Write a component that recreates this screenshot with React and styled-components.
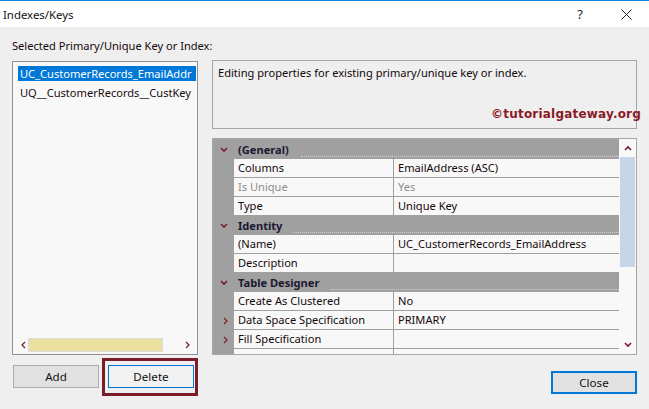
import React from 'react';
import styled, { createGlobalStyle } from 'styled-components';

const GlobalStyle = createGlobalStyle`
    body {
        margin: 0;
        background: #efefef;
        font-family: "Noto Sans", "Liberation Sans", sans-serif;
        font-size: 11.1px;
        color: #14080a;
    }
`;

const Window = styled.div`
    width: 649px;
    height: 409px;
    box-sizing: border-box;
    border-top: 1px solid #1883d7;
    background: #efefef;
    overflow: hidden;
`;

const TitleBar = styled.div`
    height: 26px;
    background: #ffffff;
    display: flex;
    align-items: center;
    padding: 0 0 0 3px;
`;

const Title = styled.div`
    flex: 1;
    color: #111;
    font-size: 11.4px;
`;

const TitleButton = styled.div`
    width: ${p => p.$w}px;
    display: flex;
    justify-content: center;
    align-items: center;
    color: #222;
    font-size: 13px;
`;

const Content = styled.div`
    padding: 0 12px;
`;

const Label = styled.div`
    height: 16px;
    line-height: 16px;
    margin: 11px 0 6px;
`;

const Main = styled.div`
    display: grid;
    grid-template-columns: 186px 425px;
    column-gap: 14px;
    height: 295px;
`;

const ListBox = styled.div`
    margin-top: 1px;
    border: 1px solid #8f9196;
    background: #f8f8f8;
    display: flex;
    flex-direction: column;
    padding: 4px 0 0 5px;
    box-sizing: border-box;
    height: 294px;
`;

const ListItem = styled.div`
    width: 178px;
    height: 15px;
    line-height: 15px;
    margin-bottom: 4px;
    padding-left: 2px;
    box-sizing: border-box;
    white-space: nowrap;
    overflow: hidden;
    background: ${p => (p.$selected ? '#0078d7' : 'transparent')};
    color: ${p => (p.$selected ? '#ffffff' : '#1a0a10')};
`;

const HScroll = styled.div`
    margin: auto 0 1px -5px;
    height: 17px;
    display: flex;
    align-items: center;
    padding: 0 6px 0 8px;
`;

const HThumb = styled.div`
    width: 135px;
    height: 14px;
    margin: 0 auto 0 1px;
    background-color: #e7e0b6;
    background-image: radial-gradient(#f2df82 0.65px, transparent 0.75px);
    background-size: 2px 2px;
    border: 1px solid #d8dde0;
    box-sizing: border-box;
`;

const RightColumn = styled.div`
    display: flex;
    flex-direction: column;
    gap: 9px;
`;

const DescBox = styled.div`
    height: 69px;
    box-sizing: border-box;
    border: 1px solid #a6a6a6;
    display: flex;
    flex-direction: column;
    justify-content: space-between;
    padding: 4px 0 7px 5px;
`;

const Watermark = styled.div`
    align-self: flex-end;
    margin-right: -5px;
    font-family: "DejaVu Sans", Verdana, sans-serif;
    font-weight: bold;
    font-size: 12px;
    color: #8b1a28;
    letter-spacing: 0.2px;
`;

const Grid = styled.div`
    height: 217px;
    box-sizing: border-box;
    border: 1px solid #a6a6a6;
    display: flex;
    background: #f8f8f8;
`;

const Rows = styled.div`
    flex: 1;
    background: #a0a0a0;
    overflow: hidden;
    padding-top: 1px;
`;

const Row = styled.div`
    display: grid;
    grid-template-columns: 21px 160px 1fr;
    height: 19px;
`;

const Gutter = styled.div`
    display: flex;
    align-items: center;
    justify-content: center;
    padding-left: ${p => (p.$shift ? 4 : 0)}px;
`;

const Cell = styled.div`
    background: #f8f8f8;
    border-bottom: 1px solid #a0a0a0;
    border-right: ${p => (p.$name ? '1px solid #a0a0a0' : 'none')};
    line-height: 18px;
    padding-left: 4px;
    color: ${p => (p.$muted ? '#8d8d8d' : '#14080a')};
    white-space: nowrap;
    overflow: hidden;
`;

const HeaderCell = styled.div`
    grid-column: 2 / 4;
    display: flex;
    align-items: center;
    padding-left: 4px;
    font-weight: bold;
    color: #1b1830;
`;

const Dots = styled.div`
    flex: 1;
    align-self: flex-end;
    margin: 0 0 2px 12px;
    border-bottom: 1px dotted #cfcfcf;
`;

const VScroll = styled.div`
    width: 17px;
    background: #f8f8f8;
    display: flex;
    flex-direction: column;
    align-items: center;
`;

const ArrowBox = styled.div`
    height: 18px;
    display: flex;
    align-items: center;
    justify-content: center;
`;

const VThumb = styled.div`
    width: 15px;
    height: 110px;
    background-color: #c6d6e6;
    background-image: radial-gradient(#efe08c 0.55px, transparent 0.65px);
    background-size: 2px 2px;
    margin-bottom: auto;
`;

const Footer = styled.div`
    display: flex;
    align-items: flex-start;
    margin-top: 10px;
    padding-left: 1px;
`;

const Button = styled.button`
    width: 86px;
    height: 23px;
    box-sizing: border-box;
    font: inherit;
    font-size: 11.6px;
    color: #111;
    background: ${p => (p.$plain ? '#f2f2f2' : '#e1e1e1')};
    border: ${p => (p.$focus ? '1px solid #0078d7' : '1px solid #adadad')};
    padding: 0;
`;

const DeleteButton = styled(Button)`
    position: relative;
    margin-left: 9px;
    &::after {
        content: '';
        position: absolute;
        top: -8px;
        left: -7px;
        right: -5px;
        bottom: -9px;
        border: 3px solid #7a1c2a;
    }
`;

const CloseButton = styled(Button)`
    margin: 6px 0 0 auto;
    border: 2px solid #0078d7;
`;

const Chevron = ({ dir }) => {
    const pts = {
        down: '1,1 4,4 7,1',
        right: '1,1 4,4 1,7',
        up: '1,5 4,2 7,5',
        left: '4,1 1,4 4,7',
    }[dir];
    const size = dir === 'right' || dir === 'left' ? [6, 8] : [8, 6];
    return (
        <svg width={size[0]} height={size[1]} viewBox={`0 0 ${size[0]} ${size[1]}`}>
            <polyline points={pts} fill="none" stroke="#7a1c2a" strokeWidth={dir === 'down' || dir === 'up' ? 1.6 : 1.2} />
        </svg>
    );
};

const sections = [
    {
        title: '(General)',
        rows: [
            { name: 'Columns', value: 'EmailAddress (ASC)' },
            { name: 'Is Unique', value: 'Yes', muted: true },
            { name: 'Type', value: 'Unique Key' },
        ],
    },
    {
        title: 'Identity',
        rows: [
            { name: '(Name)', value: 'UC_CustomerRecords_EmailAddress' },
            { name: 'Description', value: '' },
        ],
    },
    {
        title: 'Table Designer',
        rows: [
            { name: 'Create As Clustered', value: 'No' },
            { name: 'Data Space Specification', value: 'PRIMARY', expand: true },
            { name: 'Fill Specification', value: '', expand: true },
            { name: '', value: '' },
        ],
    },
];

const App = () => (
    <Window>
        <GlobalStyle />
        <TitleBar>
            <Title>Indexes/Keys</Title>
            <TitleButton $w={46}>?</TitleButton>
            <TitleButton $w={46}>
                <svg width="11" height="11" viewBox="0 0 11 11">
                    <path d="M0.5 0.5 L10.5 10.5 M10.5 0.5 L0.5 10.5" stroke="#222" strokeWidth="1" />
                </svg>
            </TitleButton>
        </TitleBar>
        <Content>
            <Label>Selected Primary/Unique Key or Index:</Label>
            <Main>
                <ListBox>
                    <ListItem $selected>UC_CustomerRecords_EmailAddr</ListItem>
                    <ListItem>UQ__CustomerRecords__CustKey</ListItem>
                    <HScroll>
                        <Chevron dir="left" />
                        <HThumb />
                        <Chevron dir="right" />
                    </HScroll>
                </ListBox>
                <RightColumn>
                    <DescBox>
                        <div>Editing properties for existing primary/unique key or index.</div>
                        <Watermark>©tutorialgateway.org</Watermark>
                    </DescBox>
                    <Grid>
                        <Rows>
                            {sections.map(section => (
                                <React.Fragment key={section.title}>
                                    <Row>
                                        <Gutter><Chevron dir="down" /></Gutter>
                                        <HeaderCell>
                                            {section.title}
                                            <Dots />
                                        </HeaderCell>
                                    </Row>
                                    {section.rows.map((row, i) => (
                                        <Row key={i}>
                                            <Gutter $shift>{row.expand && <Chevron dir="right" />}</Gutter>
                                            <Cell $name $muted={row.muted}>{row.name}</Cell>
                                            <Cell $muted={row.muted}>{row.value}</Cell>
                                        </Row>
                                    ))}
                                </React.Fragment>
                            ))}
                        </Rows>
                        <VScroll>
                            <ArrowBox><Chevron dir="up" /></ArrowBox>
                            <VThumb />
                            <ArrowBox><Chevron dir="down" /></ArrowBox>
                        </VScroll>
                    </Grid>
                </RightColumn>
            </Main>
            <Footer>
                <Button>Add</Button>
                <DeleteButton $plain $focus>Delete</DeleteButton>
                <CloseButton>Close</CloseButton>
            </Footer>
        </Content>
    </Window>
);

export default App;
